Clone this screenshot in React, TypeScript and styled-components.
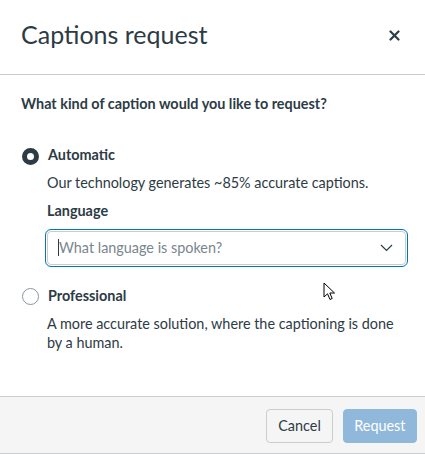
import React from "react";
import styled, { createGlobalStyle } from "styled-components";

const Global = createGlobalStyle`
  html, body { margin: 0; padding: 0; background: #ffffff; }
  body { font-family: Lato, "Open Sans", "Liberation Sans", sans-serif; color: #2d3b45; }
  * { box-sizing: border-box; }
`;

const Dialog = styled.div`
  position: relative;
  width: 425px;
  height: 454px;
  display: flex;
  flex-direction: column;
  background: #ffffff;
  overflow: hidden;
`;

const Header = styled.header`
  height: 75px;
  flex: none;
  display: flex;
  justify-content: space-between;
  align-items: flex-start;
  padding: 19px 21px 0 21px;
  border-bottom: 1px solid #c7cdd1;
`;

const Title = styled.h2`
  margin: 0;
  font-size: 25px;
  line-height: 1.24;
  font-weight: 400;
  color: #2d3b45;
`;

const CloseButton = styled.button`
  border: none;
  background: none;
  padding: 0;
  margin: 10px 4px 0 0;
  width: 12px;
  height: 12px;
  display: flex;
  align-items: center;
  justify-content: center;
  cursor: pointer;
`;

const Body = styled.main`
  flex: 1;
  padding: 19px 21px 0 21px;
  display: flex;
  flex-direction: column;
`;

const Question = styled.p`
  margin: 0 0 31px 0;
  font-size: 14.4px;
  line-height: 20px;
  font-weight: 700;
`;

const Option = styled.div<{ $gap: number }>`
  display: flex;
  flex-direction: column;
  margin-bottom: ${(p) => p.$gap}px;
`;

const RadioRow = styled.label`
  display: flex;
  align-items: center;
  gap: 9px;
  font-size: 14.4px;
  line-height: 20px;
  font-weight: 700;
  cursor: pointer;
`;

const RadioCircle = styled.span<{ $checked?: boolean }>`
  width: 17px;
  height: 17px;
  margin: 2px 0 0 1px;
  border-radius: 50%;
  flex: none;
  background: #ffffff;
  border: ${(p) => (p.$checked ? "5px solid #2d3b45" : "1px solid #8b969e")};
`;

const OptionContent = styled.div`
  padding-left: 26px;
  display: flex;
  flex-direction: column;
`;

const Description = styled.p<{ $top: number }>`
  margin: ${(p) => p.$top}px 0 0 0;
  font-size: 14.4px;
  line-height: 19.5px;
  font-weight: 400;
`;

const FieldLabel = styled.div`
  margin-top: 8px;
  font-size: 14.4px;
  line-height: 20px;
  font-weight: 700;
`;

const SelectRing = styled.div`
  margin: 8px 0 0 -2px;
  width: 363px;
  height: 38px;
  border: 1.5px solid #0374b5;
  border-radius: 6px;
  padding: 1px;
`;

const SelectBox = styled.div`
  height: 100%;
  border: 1px solid #c7cdd1;
  border-radius: 4px;
  display: flex;
  align-items: center;
  padding: 0 12px 0 10px;
`;

const Caret = styled.span`
  width: 1px;
  height: 17px;
  background: #2d3b45;
  flex: none;
`;

const Placeholder = styled.span`
  flex: 1;
  font-size: 14.4px;
  color: #7a858d;
  font-weight: 400;
  white-space: nowrap;
`;

const Footer = styled.footer`
  height: 58px;
  flex: none;
  background: #f5f5f5;
  border-top: 1px solid #c7cdd1;
  border-bottom: 1px solid #c7cdd1;
  display: flex;
  justify-content: flex-end;
  align-items: center;
  gap: 10px;
  padding: 0 8px 0 0;
`;

const Button = styled.button<{ $primary?: boolean }>`
  height: 34px;
  padding: 0 ${(p) => (p.$primary ? "10.5px" : "11px")};
  border-radius: 4px;
  font-family: Lato, "Open Sans", "Liberation Sans", sans-serif;
  font-size: 14.4px;
  font-weight: 400;
  border: 1px solid ${(p) => (p.$primary ? "#8fb8db" : "#c7cdd1")};
  background: ${(p) => (p.$primary ? "#8fb8db" : "#f5f5f5")};
  color: ${(p) => (p.$primary ? "#ffffff" : "#2d3b45")};
  margin-top: 1px;
`;

const Pointer = styled.svg`
  position: absolute;
  left: 323px;
  top: 282px;
  pointer-events: none;
`;

export default function App() {
  return (
    <>
      <Global />
      <Dialog>
        <Header>
          <Title>Captions request</Title>
          <CloseButton aria-label="Close">
            <svg width="11" height="11" viewBox="0 0 11 11">
              <path d="M1.5 1.5 L9.5 9.5 M9.5 1.5 L1.5 9.5" stroke="#2d3b45" strokeWidth="2.2" strokeLinecap="round" />
            </svg>
          </CloseButton>
        </Header>
        <Body>
          <Question>What kind of caption would you like to request?</Question>
          <Option $gap={19}>
            <RadioRow>
              <RadioCircle $checked />
              Automatic
            </RadioRow>
            <OptionContent>
              <Description $top={8}>Our technology generates ~85% accurate captions.</Description>
              <FieldLabel>Language</FieldLabel>
              <SelectRing>
                <SelectBox>
                  <Caret />
                  <Placeholder>What language is spoken?</Placeholder>
                  <svg width="13" height="8" viewBox="0 0 13 8">
                    <polyline points="1,1 6.5,6.5 12,1" fill="none" stroke="#2d3b45" strokeWidth="1.2" />
                  </svg>
                </SelectBox>
              </SelectRing>
            </OptionContent>
          </Option>
          <Option $gap={0}>
            <RadioRow>
              <RadioCircle />
              Professional
            </RadioRow>
            <OptionContent>
              <Description $top={8}>
                A more accurate solution, where the captioning is done by a human.
              </Description>
            </OptionContent>
          </Option>
        </Body>
        <Footer>
          <Button>Cancel</Button>
          <Button $primary>Request</Button>
        </Footer>
        <Pointer width="14" height="20" viewBox="0 0 14 20">
          <path d="M1 1 L1 15 L4.5 11.8 L7 17.5 L9.2 16.5 L6.8 11 L11.5 11 Z" fill="#ffffff" stroke="#000000" strokeWidth="1" strokeLinejoin="round" />
        </Pointer>
      </Dialog>
    </>
  );
}
